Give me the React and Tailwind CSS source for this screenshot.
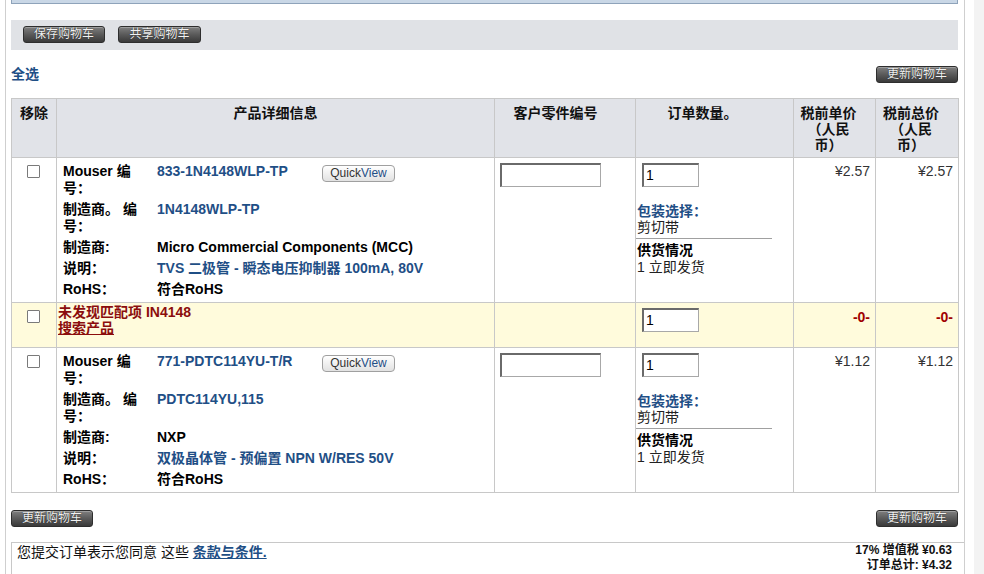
import React from "react";

const BLUE = "text-[#1f4f86]";

function DarkButton({ children, className = "" }) {
  return (
    <button
      type="button"
      className={
        "h-[17px] w-[82px] rounded-[3px] border border-[#2e2e2e] bg-linear-to-b from-[#808080] via-[#5a5a5a] to-[#3a3a3a] text-[12px] leading-[15px] text-[#f2f2f2] [text-shadow:0_0_1px_#000] shadow-[inset_0_1px_0_rgba(255,255,255,0.25)] " +
        className
      }
    >
      {children}
    </button>
  );
}

function Checkbox() {
  return <span className="block ml-[15px] w-[13px] h-[13px] border border-[#7a7a7a] bg-white rounded-[1px]" />;
}

function TextInput({ value = "", className = "" }) {
  return (
    <div
      className={
        "h-[24px] bg-white border-t-2 border-l-2 border-b border-r border-t-[#6a6a6a] border-l-[#6a6a6a] border-b-[#a8a8a8] border-r-[#a8a8a8] pl-[2px] text-[14px] leading-[20px] text-black " +
        className
      }
    >
      {value}
    </div>
  );
}

function QuickView() {
  return (
    <button
      type="button"
      className="mt-[1.5px] h-[17px] w-[73px] rounded-[4px] border border-[#a0a0a0] bg-linear-to-b from-white to-[#e2e2e2] text-[12px] font-normal leading-[15px] text-[#333] font-['Liberation_Sans',sans-serif]"
    >
      Quick<span className="text-[#1f4f86]">View</span>
    </button>
  );
}

function Details({ mouser, mfrPn, mfr, desc }) {
  const lab = "py-[2px] pr-[9px]";
  const val = "py-[2px]";
  return (
    <div className="grid grid-cols-[94px_1fr] ml-[5px] leading-[17px] font-bold text-[14px] text-black">
      <div className={lab}>Mouser 编号：</div>
      <div className={val + " flex items-start"}>
        <span className={"w-[165px] " + BLUE}>{mouser}</span>
        <QuickView />
      </div>
      <div className={lab}>制造商。 编号：</div>
      <div className={val + " " + BLUE}>{mfrPn}</div>
      <div className={lab}>制造商:</div>
      <div className={val}>{mfr}</div>
      <div className={lab}>说明：</div>
      <div className={val + " " + BLUE}>{desc}</div>
      <div className={lab}>RoHS：</div>
      <div className={val}>符合RoHS</div>
    </div>
  );
}

function QtyCell() {
  return (
    <td className="align-top pt-[5px] pl-[1px] border border-[#c8c8c8]">
      <TextInput value="1" className="w-[57px] ml-[5px]" />
      <div className="mt-[16px] leading-[16px]">
        <div className={"font-bold " + BLUE}>包装选择：</div>
        <div className="text-[#222]">剪切带</div>
      </div>
      <div className="w-[136px] h-px bg-[#a0a0a0] mt-[3px] -ml-[1px]" />
      <div className="mt-[3px] leading-[17px]">
        <div className="font-bold text-black">供货情况</div>
        <div className="text-[#222]">1 立即发货</div>
      </div>
    </td>
  );
}

function ProductRow({ mouser, mfrPn, mfr, desc, price }) {
  const td = "border border-[#c8c8c8] align-top";
  return (
    <tr className="h-[145px]">
      <td className={td + " pt-[7px]"}>
        <Checkbox />
      </td>
      <td className={td + " pt-[3px] pl-[1px]"}>
        <Details mouser={mouser} mfrPn={mfrPn} mfr={mfr} desc={desc} />
      </td>
      <td className={td + " pt-[5px] pl-[5px]"}>
        <TextInput className="w-[101px]" />
      </td>
      <QtyCell />
      <td className={td + " pt-[5px] pr-[5px] text-right leading-[17px] text-[#333]"}>{price}</td>
      <td className={td + " pt-[5px] pr-[5px] text-right leading-[17px] text-[#333]"}>{price}</td>
    </tr>
  );
}

export default function App() {
  const th = "border border-[#c8c8c8] bg-[#e1e3e8] align-top pt-[6px] font-bold leading-[16px] text-[#111]";
  return (
    <div className="flex w-[984px] h-[574px] overflow-hidden bg-white text-[14px] text-black [text-spacing-trim:space-all] font-['Liberation_Sans','Noto_Sans_CJK_SC',sans-serif]">
      <div className="w-[5px] shrink-0" />
      <div className="w-[960px] shrink-0 border-x border-[#cfcfcf] pl-[5px] pr-[6px]">
        {/* top bar */}
        <div className="h-[4px] bg-[#c9d7e6] border border-t-0 border-[#8ea3ba]" />

        {/* toolbar */}
        <div className="mt-[16px] h-[30px] bg-[#e0e2e6] flex items-start gap-[13px] pl-[12px] pt-[6px]">
          <DarkButton>保存购物车</DarkButton>
          <DarkButton className="w-[83px]">共享购物车</DarkButton>
        </div>

        {/* select all row */}
        <div className="mt-[16px] flex items-center justify-between h-[17px]">
          <span className={"font-bold leading-[17px] " + BLUE}>全选</span>
          <DarkButton>更新购物车</DarkButton>
        </div>

        {/* table */}
        <table className="mt-[15px] w-[947px] table-fixed border-collapse border border-[#c8c8c8]">
          <thead>
            <tr className="h-[59px]">
              <th className={th + " w-[45px]"}>移除</th>
              <th className={th + " w-[438px]"}>产品详细信息</th>
              <th className={th + " w-[141px] pr-[19px]"}>客户零件编号</th>
              <th className={th + " w-[158px] pr-[24px]"}>订单数量。</th>
              <th className={th + " w-[82px] pr-[12px]"}>
                税前单价
                <br />
                （人民
                <br />
                币）
              </th>
              <th className={th + " w-[83px] pr-[12px]"}>
                税前总价
                <br />
                （人民
                <br />
                币）
              </th>
            </tr>
          </thead>
          <tbody>
            <ProductRow
              mouser="833-1N4148WLP-TP"
              mfrPn="1N4148WLP-TP"
              mfr="Micro Commercial Components (MCC)"
              desc="TVS 二极管 - 瞬态电压抑制器 100mA, 80V"
              price="¥2.57"
            />
            <tr className="h-[45px] bg-[#fffbdc]">
              <td className="border border-[#c8c8c8] align-top pt-[7px]">
                <Checkbox />
              </td>
              <td className="border border-[#c8c8c8] align-top pt-[1px] pl-[1px] leading-[16px] text-[#8b0d0d] font-bold">
                <div>未发现匹配项 IN4148</div>
                <div>
                  <span className="underline">搜索产品</span>
                </div>
              </td>
              <td className="border border-[#c8c8c8]" />
              <td className="border border-[#c8c8c8] align-top pt-[5px] pl-[1px]">
                <TextInput value="1" className="w-[57px] ml-[5px]" />
              </td>
              <td className="border border-[#c8c8c8] align-top pt-[6px] pr-[5px] text-right leading-[17px] font-bold text-[#a00000]">-0-</td>
              <td className="border border-[#c8c8c8] align-top pt-[6px] pr-[5px] text-right leading-[17px] font-bold text-[#a00000]">-0-</td>
            </tr>
            <ProductRow
              mouser="771-PDTC114YU-T/R"
              mfrPn="PDTC114YU,115"
              mfr="NXP"
              desc="双极晶体管 - 预偏置 NPN W/RES 50V"
              price="¥1.12"
            />
          </tbody>
        </table>

        {/* bottom buttons */}
        <div className="mt-[17px] flex justify-between">
          <DarkButton>更新购物车</DarkButton>
          <DarkButton>更新购物车</DarkButton>
        </div>

        {/* footer */}
        <div className="mt-[15px] -mr-[6px] h-[40px] border-t border-l border-[#c8c8c8] flex justify-between pl-[5px] pr-[12px]">
          <div className="pt-[1px] leading-[17px] text-[#111]">
            您提交订单表示您同意 这些{" "}
            <span className={"font-bold underline " + BLUE}>条款与条件.</span>
          </div>
          <div className="text-right text-[12px] leading-[15px] font-bold text-[#111]">
            <div>17% 增值税 ¥0.63</div>
            <div>订单总计: ¥4.32</div>
          </div>
        </div>
      </div>
      <div className="w-[9px] shrink-0" />
      <div className="flex-1 bg-[#f3f3f3]" />
    </div>
  );
}
